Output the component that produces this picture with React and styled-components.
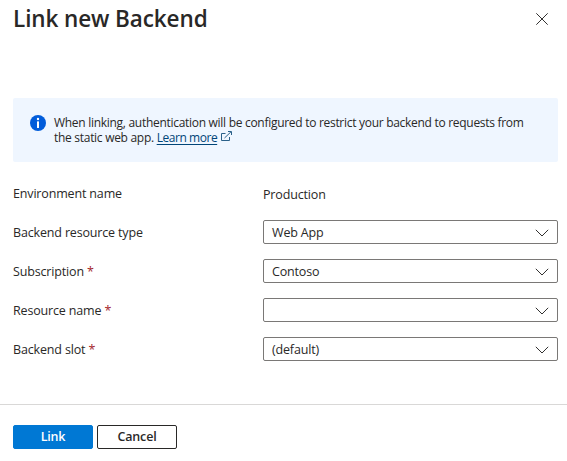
import React from "react";
import styled, { createGlobalStyle } from "styled-components";

const fields = [
  { label: "Backend resource type", value: "Web App" },
  { label: "Subscription", value: "Contoso", required: true },
  { label: "Resource name", value: "", required: true },
  { label: "Backend slot", value: "(default)", required: true },
];

function SelectField({ label, value, required }) {
  return (
    <Row>
      <Label>
        {label}
        {required && <Required> *</Required>}
      </Label>
      <Select type="button" aria-label={label}>
        <span>{value}</span>
        <Chevron width="14" height="8" viewBox="0 0 14 8" fill="none">
          <path d="M0.8 0.8L7 7L13.2 0.8" stroke="#323130" />
        </Chevron>
      </Select>
    </Row>
  );
}

function App() {
  return (
    <>
      <GlobalStyle />
      <Panel>
        <Header>
          <Title>Link new Backend</Title>
          <CloseButton type="button" aria-label="Close">
            <svg width="12" height="12" viewBox="0 0 12 12" fill="none">
              <path d="M0.3 0.3L11.7 11.7M11.7 0.3L0.3 11.7" stroke="#323130" />
            </svg>
          </CloseButton>
        </Header>

        <Banner>
          <svg width="16" height="16" viewBox="0 0 16 16">
            <circle cx="8" cy="8" r="8" fill="#015cda" />
            <circle cx="8" cy="4" r="1.2" fill="#fff" />
            <rect x="7" y="6.2" width="2" height="6.8" rx="0.6" fill="#fff" />
          </svg>
          <BannerText>
            When linking, authentication will be configured to restrict your
            backend to requests from
            <br />
            the static web app. <Link href="#">Learn more</Link>
            <ExternalIcon width="11" height="11" viewBox="0 0 11 11" fill="none">
              <path d="M4.5 2.5H0.5V9.5H8.5V6" stroke="#2a6089" />
              <path d="M3.5 7L10 0.8M7 0.5H10.5V4" stroke="#2a6089" />
            </ExternalIcon>
          </BannerText>
        </Banner>

        <Form>
          <Row>
            <Label>Environment name</Label>
            <Value>Production</Value>
          </Row>
          {fields.map((field) => (
            <SelectField key={field.label} {...field} />
          ))}
        </Form>

        <Footer>
          <Button type="button" $primary>
            Link
          </Button>
          <Button type="button">Cancel</Button>
        </Footer>
      </Panel>
    </>
  );
}
export default App;

const GlobalStyle = createGlobalStyle`
  body {
    margin: 0;
    background-color: #fff;
  }
`;

const Panel = styled.div`
  box-sizing: border-box;
  display: flex;
  flex-direction: column;
  height: 461px;
  overflow: hidden;
  color: #292827;
  font-family: "Open Sans", "Noto Sans", sans-serif;
  font-size: 12.5px;
  letter-spacing: -0.16px;
`;

const Header = styled.div`
  display: flex;
  height: 98px;
  padding: 0 19px 0 13px;
  justify-content: space-between;
  align-items: flex-start;
  box-sizing: border-box;
`;

const Title = styled.h1`
  margin: 3px 0 0;
  font-size: 22.5px;
  font-weight: 600;
  line-height: 32px;
  letter-spacing: -0.1px;
`;

const CloseButton = styled.button`
  display: flex;
  margin-top: 13px;
  padding: 0;
  border: none;
  background: none;
`;

//Banner
const Banner = styled.div`
  display: flex;
  box-sizing: border-box;
  width: 545px;
  height: 64px;
  margin-left: 13px;
  padding: 17px 0 0 17px;
  gap: 8px;
  border-radius: 2px;
  background-color: #eff6ff;
`;

const BannerText = styled.div`
  font-size: 12px;
  line-height: 15px;
  letter-spacing: -0.29px;
  white-space: nowrap;
`;

const Link = styled.a`
  color: #004578;
  letter-spacing: -0.45px;
  text-decoration: underline;
  text-underline-offset: 2px;
`;

const ExternalIcon = styled.svg`
  margin-left: 4px;
  vertical-align: 0;
`;

//Form
const Form = styled.div`
  display: flex;
  flex-direction: column;
  padding: 19px 9px 0 13px;
  gap: 15px;
`;

const Row = styled.div`
  display: grid;
  grid-template-columns: 250px 295px;
  height: 24px;
  align-items: start;
`;

const Label = styled.div`
  padding-top: 1px;
  line-height: 24px;
`;

const Value = styled.div`
  padding-top: 2px;
  line-height: 24px;
`;

const Required = styled.span`
  color: #a4262c;
`;

const Select = styled.button`
  display: flex;
  box-sizing: border-box;
  width: 295px;
  height: 24px;
  padding: 0 8px;
  justify-content: space-between;
  align-items: center;
  border: 1px solid #7a7876;
  border-radius: 2px;
  background-color: #fff;
  color: inherit;
  font: inherit;
  letter-spacing: inherit;
`;

const Chevron = styled.svg`
  margin-top: 1px;
`;

//Footer
const Footer = styled.div`
  display: flex;
  box-sizing: border-box;
  height: 57px;
  margin-top: auto;
  padding: 20px 13px 0;
  gap: 4px;
  border-top: 1px solid #d9d8d7;
`;

const Button = styled.button`
  box-sizing: border-box;
  width: 80px;
  height: 24px;
  padding: 0 0 1px;
  border: 1px solid ${({ $primary }) => ($primary ? "#0078d4" : "#292827")};
  border-radius: 2px;
  background-color: ${({ $primary }) => ($primary ? "#0078d4" : "#fff")};
  color: ${({ $primary }) => ($primary ? "#fff" : "#292827")};
  font: inherit;
  font-weight: 600;
  line-height: 21px;
  letter-spacing: inherit;
`;
